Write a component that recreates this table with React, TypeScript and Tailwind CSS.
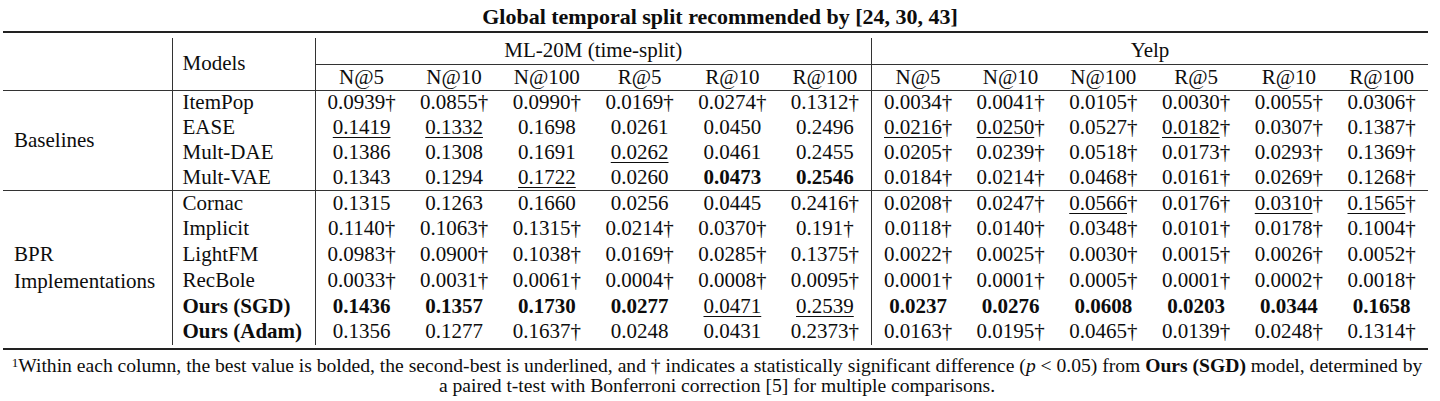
import React from "react";

// --- DATA ---
// "b:" = best (bold), "u:" = second-best (underlined), trailing † = significant
type Row = { model: string; strong?: boolean; ml: string[]; yelp: string[] };

const metrics = ["N@5", "N@10", "N@100", "R@5", "R@10", "R@100"];

const baselines: Row[] = [
    {
        model: "ItemPop",
        ml: ["0.0939†", "0.0855†", "0.0990†", "0.0169†", "0.0274†", "0.1312†"],
        yelp: ["0.0034†", "0.0041†", "0.0105†", "0.0030†", "0.0055†", "0.0306†"],
    },
    {
        model: "EASE",
        ml: ["u:0.1419", "u:0.1332", "0.1698", "0.0261", "0.0450", "0.2496"],
        yelp: ["u:0.0216†", "u:0.0250†", "0.0527†", "u:0.0182†", "0.0307†", "0.1387†"],
    },
    {
        model: "Mult-DAE",
        ml: ["0.1386", "0.1308", "0.1691", "u:0.0262", "0.0461", "0.2455"],
        yelp: ["0.0205†", "0.0239†", "0.0518†", "0.0173†", "0.0293†", "0.1369†"],
    },
    {
        model: "Mult-VAE",
        ml: ["0.1343", "0.1294", "u:0.1722", "0.0260", "b:0.0473", "b:0.2546"],
        yelp: ["0.0184†", "0.0214†", "0.0468†", "0.0161†", "0.0269†", "0.1268†"],
    },
];

const bpr: Row[] = [
    {
        model: "Cornac",
        ml: ["0.1315", "0.1263", "0.1660", "0.0256", "0.0445", "0.2416†"],
        yelp: ["0.0208†", "0.0247†", "u:0.0566†", "0.0176†", "u:0.0310†", "u:0.1565†"],
    },
    {
        model: "Implicit",
        ml: ["0.1140†", "0.1063†", "0.1315†", "0.0214†", "0.0370†", "0.191†"],
        yelp: ["0.0118†", "0.0140†", "0.0348†", "0.0101†", "0.0178†", "0.1004†"],
    },
    {
        model: "LightFM",
        ml: ["0.0983†", "0.0900†", "0.1038†", "0.0169†", "0.0285†", "0.1375†"],
        yelp: ["0.0022†", "0.0025†", "0.0030†", "0.0015†", "0.0026†", "0.0052†"],
    },
    {
        model: "RecBole",
        ml: ["0.0033†", "0.0031†", "0.0061†", "0.0004†", "0.0008†", "0.0095†"],
        yelp: ["0.0001†", "0.0001†", "0.0005†", "0.0001†", "0.0002†", "0.0018†"],
    },
    {
        model: "Ours (SGD)",
        strong: true,
        ml: ["b:0.1436", "b:0.1357", "b:0.1730", "b:0.0277", "u:0.0471", "u:0.2539"],
        yelp: ["b:0.0237", "b:0.0276", "b:0.0608", "b:0.0203", "b:0.0344", "b:0.1658"],
    },
    {
        model: "Ours (Adam)",
        strong: true,
        ml: ["0.1356", "0.1277", "0.1637†", "0.0248", "0.0431", "0.2373†"],
        yelp: ["0.0163†", "0.0195†", "0.0465†", "0.0139†", "0.0248†", "0.1314†"],
    },
];

function Value({ raw }: { raw: string }) {
    const bold = raw.startsWith("b:");
    const under = raw.startsWith("u:");
    const text = bold || under ? raw.slice(2) : raw;
    const dagger = text.endsWith("†");
    const num = dagger ? text.slice(0, -1) : text;

    return (
        <>
            <span
                className={
                    bold
                        ? "font-bold"
                        : under
                          ? "underline decoration-1 underline-offset-[3px]"
                          : ""
                }
            >
                {num}
            </span>
            {dagger && "†"}
        </>
    );
}

function DataRow({ row, label, span, height }: { row: Row; label?: React.ReactNode; span: number; height: string }) {
    return (
        <tr className={height}>
            {label !== undefined && (
                <td rowSpan={span} className="border-r border-[#333] pl-[11px] align-middle text-left leading-[27px]">
                    {label}
                </td>
            )}
            <td className={`border-r border-[#333] pl-[10px] text-left ${row.strong ? "font-bold" : ""}`}>
                {row.model}
            </td>
            {row.ml.map((v, i) => (
                <td key={"m" + i} className={`text-center ${i === 5 ? "border-r border-[#333]" : ""}`}>
                    <Value raw={v} />
                </td>
            ))}
            {row.yelp.map((v, i) => (
                <td key={"y" + i} className="text-center">
                    <Value raw={v} />
                </td>
            ))}
        </tr>
    );
}

export default function App() {
    return (
        <div
            className="w-[1440px] h-[401px] bg-white text-[#0d0d0d] overflow-hidden"
            style={{ fontFamily: '"Liberation Serif", "Times New Roman", serif' }}
        >
            {/* TITLE */}
            <div className="h-[31px] flex items-center justify-center text-[22px] font-bold pt-[1px]">
                Global temporal split recommended by [24, 30, 43]
            </div>

            {/* TABLE between top and bottom rules */}
            <div className="ml-[3px] w-[1425px] border-t-2 border-b-2 border-[#222] pt-[5px] pb-[3px]">
                <table className="w-full table-fixed border-collapse text-[21px] leading-none">
                    <colgroup>
                        <col className="w-[169px]" />
                        <col className="w-[143px]" />
                    </colgroup>
                    <thead>
                        <tr className="h-[26px]">
                            <th rowSpan={2} className="border-r border-[#333]"></th>
                            <th rowSpan={2} className="border-r border-[#333] pl-[10px] text-left font-normal">
                                Models
                            </th>
                            <th colSpan={6} className="border-r border-b border-[#333] font-normal">
                                ML-20M (time-split)
                            </th>
                            <th colSpan={6} className="border-b border-[#333] font-normal">
                                Yelp
                            </th>
                        </tr>
                        <tr className="h-[26px] border-b border-[#333]">
                            {metrics.map((m, i) => (
                                <th key={"mh" + i} className={`font-normal ${i === 5 ? "border-r border-[#333]" : ""}`}>
                                    {m}
                                </th>
                            ))}
                            {metrics.map((m, i) => (
                                <th key={"yh" + i} className="font-normal">
                                    {m}
                                </th>
                            ))}
                        </tr>
                    </thead>
                    <tbody className="border-b border-[#333]">
                        {baselines.map((r, i) => (
                            <DataRow key={r.model} row={r} span={4} height="h-[25px]" label={i === 0 ? "Baselines" : undefined} />
                        ))}
                    </tbody>
                    <tbody>
                        {bpr.map((r, i) => (
                            <DataRow
                                key={r.model}
                                row={r}
                                span={6}
                                height="h-[25.8px]"
                                label={
                                    i === 0 ? (
                                        <>
                                            BPR
                                            <br />
                                            Implementations
                                        </>
                                    ) : undefined
                                }
                            />
                        ))}
                    </tbody>
                </table>
            </div>

            {/* FOOTNOTE */}
            <p className="text-center text-[19.6px] leading-[20px] pt-[6px] pr-[6px]">
                <span className="whitespace-nowrap">
                    <span className="text-[13px] align-top leading-none">1</span>
                    Within each column, the best value is bolded, the second-best is underlined, and † indicates a statistically
                    significant difference (<i>p</i> &lt; 0.05) from <b>Ours (SGD)</b> model, determined by
                </span>
                <br />
                a paired t-test with Bonferroni correction [5] for multiple comparisons.
            </p>
        </div>
    );
}
